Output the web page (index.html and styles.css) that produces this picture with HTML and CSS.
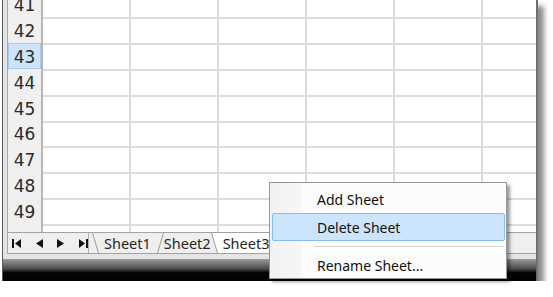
FILE: index.html
```html
<!DOCTYPE html>
<html lang="en">

<head>
  <meta charset="UTF-8">
  <title>Sheet tabs context menu</title>
  <link rel="stylesheet" href="styles.css">
</head>

<body>
  <div class="window">
    <div class="pane">
      <div class="sheet">
        <div class="grid">
          <div class="row"><span class="rh">41</span><span></span><span></span><span></span><span></span><span></span><span></span></div>
          <div class="row"><span class="rh">42</span><span></span><span></span><span></span><span></span><span></span><span></span></div>
          <div class="row"><span class="rh selected">43</span><span></span><span></span><span></span><span></span><span></span><span></span></div>
          <div class="row"><span class="rh">44</span><span></span><span></span><span></span><span></span><span></span><span></span></div>
          <div class="row"><span class="rh">45</span><span></span><span></span><span></span><span></span><span></span><span></span></div>
          <div class="row"><span class="rh">46</span><span></span><span></span><span></span><span></span><span></span><span></span></div>
          <div class="row"><span class="rh">47</span><span></span><span></span><span></span><span></span><span></span><span></span></div>
          <div class="row"><span class="rh">48</span><span></span><span></span><span></span><span></span><span></span><span></span></div>
          <div class="row"><span class="rh">49</span><span></span><span></span><span></span><span></span><span></span><span></span></div>
          <div class="row"><span class="rh"></span><span></span><span></span><span></span><span></span><span></span><span></span></div>
        </div>
      </div>

      <div class="tabbar">
        <div class="nav">
          <svg width="9" height="9" viewBox="0 0 9 9"><rect x="0" y="0" width="2" height="9"/><polygon points="9,0 9,9 3,4.5"/></svg>
          <svg width="7" height="9" viewBox="0 0 7 9"><polygon points="7,0 7,9 0,4.5"/></svg>
          <svg width="7" height="9" viewBox="0 0 7 9"><polygon points="0,0 0,9 7,4.5"/></svg>
          <svg width="9" height="9" viewBox="0 0 9 9"><polygon points="0,0 0,9 6,4.5"/><rect x="7" y="0" width="2" height="9"/></svg>
        </div>
        <div class="tabs">
          <svg class="edge" width="7" height="20" viewBox="0 0 7 20"><polygon class="fill" points="0,0 7,0 7,20 6,20"/><line x1="0.5" y1="0" x2="6.5" y2="20"/></svg>
          <span class="tab first">Sheet1</span>
          <svg class="edge" width="7" height="20" viewBox="0 0 7 20"><polygon class="fill" points="0,0 7,0 1,20 0,20"/><line x1="6.5" y1="0" x2="0.5" y2="20"/></svg>
          <span class="tab second">Sheet2</span>
          <svg class="edge active" width="7" height="20" viewBox="0 0 7 20"><polygon class="fill" points="0,0 7,0 7,20 6,20"/><line x1="0.5" y1="0" x2="6.5" y2="20"/></svg>
          <span class="tab active">Sheet3</span>
        </div>
      </div>
    </div>
    <div class="strip"></div>
    <div class="taskbar"></div>
  </div>

  <div class="menu">
    <div class="item">Add Sheet</div>
    <div class="item hover">Delete Sheet</div>
    <div class="separator"></div>
    <div class="item">Rename Sheet...</div>
  </div>
</body>

</html>
```

FILE: styles.css
```css
body {
  margin: 0;
  background-color: #fff;
  font-family: "Noto Sans", Arial, sans-serif;
}

.window {
  margin-left: 2px;
  width: 536px;
  height: 281px;
  box-sizing: border-box;
  border-left: 1px solid #5a5a5a;
  border-right: 2px solid #6e6e6e;
  background-color: #e4e4e4;
  box-shadow: 6px 6px 5px rgba(0, 0, 0, 0.45);
  display: flex;
  flex-direction: column;
}

.pane {
  margin-left: 4px;
}

.sheet {
  height: 232px;
  overflow: hidden;
  background-color: #fff;
}

.grid {
  margin-top: -9px;
}

.row {
  display: grid;
  grid-template-columns: 36px repeat(5, 88px) 1fr;
  height: 25.9px;
}

.row span {
  box-sizing: border-box;
  border-right: 2px solid #dcdcdc;
  border-bottom: 2px solid #dcdcdc;
}

.row span:last-child {
  border-right: none;
}

.row .rh {
  background-color: #f0f0f0;
  border-left: 1px solid #a8a8a8;
  border-right: 2px solid #b6b6b6;
  border-bottom: 2px solid #c6c6c6;
  font-family: "DejaVu Sans", Verdana, sans-serif;
  font-size: 17px;
  line-height: 24px;
  padding-top: 2px;
  text-align: center;
  color: #2b2b2b;
}

.row .rh.selected {
  background-color: #cce5fb;
  box-shadow: inset 0 0 0 1px #a6cbee;
}

.tabbar {
  display: flex;
  height: 22px;
  box-sizing: border-box;
  border-top: 1px solid #a3a3a3;
  border-bottom: 1px solid #a3a3a3;
  border-left: 1px solid #a8a8a8;
  background-color: #efefef;
}

.nav {
  width: 81px;
  box-sizing: border-box;
  border-right: 1px solid #b0b0b0;
  display: flex;
  align-items: center;
  gap: 14px;
  padding-left: 4px;
}

.nav svg {
  fill: #111;
}

.nav svg:nth-child(2) {
  margin-left: 1px;
}

.nav svg:nth-child(4) {
  margin-left: 1px;
}

.tabs {
  display: flex;
  align-items: stretch;
  padding-left: 3px;
}

.edge {
  flex: none;
}

.edge line {
  stroke: #9a9a9a;
  stroke-width: 1;
}

.edge .fill {
  fill: #efefef;
}

.edge.active .fill {
  fill: #fff;
}

.tab {
  font-size: 14.5px;
  line-height: 20px;
  color: #262626;
}

.tab.first {
  padding: 0 6px 0 5px;
}

.tab.second {
  padding: 0;
}

.tab.active {
  background-color: #fff;
  padding-left: 5px;
  width: 60px;
}

.strip {
  height: 5px;
}

.taskbar {
  flex: 1;
  background: linear-gradient(#9b9b9b, #4a4a4a 45%, #050505 62%, #000);
}

.menu {
  position: absolute;
  left: 269px;
  top: 182px;
  width: 238px;
  height: 97px;
  box-sizing: border-box;
  border: 1px solid #979797;
  padding: 2px 0 1px;
  background: linear-gradient(to right, #f2f2f2, #f6f6f6 30px, #fcfcfc 32px);
  box-shadow: 3px 3px 3px rgba(0, 0, 0, 0.4);
}

.item {
  height: 28px;
  margin: 0 1px 0 2px;
  box-sizing: border-box;
  padding-left: 44px;
  font-size: 14px;
  line-height: 27px;
  color: #111;
  border: 1px solid transparent;
  border-radius: 2px;
}

.item.hover {
  background-color: #cce5fc;
  border-color: #86bdef;
}

.separator {
  height: 10px;
  margin-left: 44px;
  margin-right: 1px;
  background: linear-gradient(#fcfcfc 5px, #d6d6d6 5px, #d6d6d6 6px, #fff 6px);
}
```
